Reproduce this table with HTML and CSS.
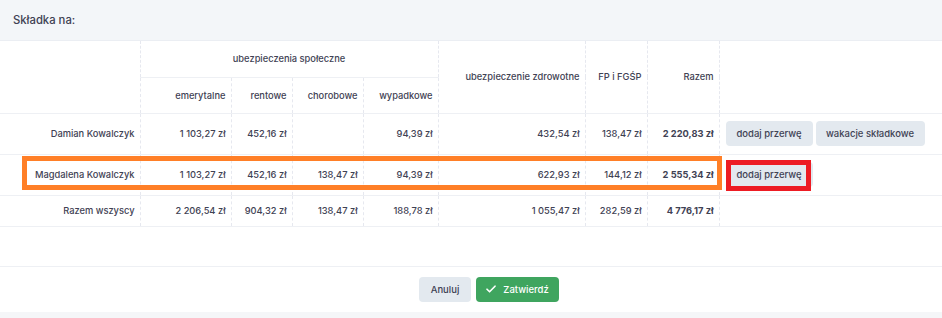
FILE: index.html
```html
<!DOCTYPE html>
<html lang="pl">
<head>
<meta charset="utf-8">
<link rel="stylesheet" href="styles.css">
</head>
<body>
<div class="modal">
  <div class="modal-header">Składka na:</div>
  <table class="grid">
    <colgroup>
      <col class="c-name"><col class="c-em"><col class="c-ren"><col class="c-cho"><col class="c-wyp"><col class="c-zdr"><col class="c-fp"><col class="c-raz"><col>
    </colgroup>
    <thead>
      <tr class="h1">
        <th rowspan="2"></th>
        <th colspan="4" class="center">ubezpieczenia społeczne</th>
        <th rowspan="2">ubezpieczenie zdrowotne</th>
        <th rowspan="2">FP i FGŚP</th>
        <th rowspan="2">Razem</th>
        <th rowspan="2" class="act"></th>
      </tr>
      <tr class="h2">
        <th>emerytalne</th>
        <th>rentowe</th>
        <th>chorobowe</th>
        <th>wypadkowe</th>
      </tr>
    </thead>
    <tbody>
      <tr class="r-main">
        <td>Damian Kowalczyk</td>
        <td>1 103,27 zł</td>
        <td>452,16 zł</td>
        <td></td>
        <td>94,39 zł</td>
        <td>432,54 zł</td>
        <td>138,47 zł</td>
        <td class="bold">2 220,83 zł</td>
        <td class="act"><div class="btns"><button class="btn btn-sm w1">dodaj przerwę</button><button class="btn btn-sm w2">wakacje składkowe</button></div></td>
      </tr>
      <tr class="r-main">
        <td>Magdalena Kowalczyk</td>
        <td>1 103,27 zł</td>
        <td>452,16 zł</td>
        <td>138,47 zł</td>
        <td>94,39 zł</td>
        <td>622,93 zł</td>
        <td>144,12 zł</td>
        <td class="bold">2 555,34 zł</td>
        <td class="act"><div class="btns"><button class="btn btn-sm w1">dodaj przerwę</button></div></td>
      </tr>
      <tr class="r-total">
        <td>Razem wszyscy</td>
        <td>2 206,54 zł</td>
        <td>904,32 zł</td>
        <td>138,47 zł</td>
        <td>188,78 zł</td>
        <td>1 055,47 zł</td>
        <td>282,59 zł</td>
        <td class="bold">4 776,17 zł</td>
        <td class="act"></td>
      </tr>
    </tbody>
  </table>
  <div class="spacer"></div>
  <div class="modal-footer">
    <button class="btn btn-light">Anuluj</button>
    <button class="btn btn-success"><svg class="check" width="10" height="8" viewBox="0 0 10 8"><path d="M1 4.2 L3.6 6.8 L9 1.2" fill="none" stroke="#fff" stroke-width="1.6" stroke-linecap="round" stroke-linejoin="round"/></svg>Zatwierdź</button>
  </div>
  <div class="mark mark-orange"></div>
  <div class="mark mark-red"></div>
</div>
</body>
</html>
```

FILE: styles.css
```css
* { box-sizing: border-box; }
html, body { margin: 0; padding: 0; }
body {
  background: #f5f6f8;
  font-family: Inter, "Noto Sans", sans-serif;
  color: #3f4254;
  width: 942px;
  height: 318px;
  overflow: hidden;
}
.modal {
  position: relative;
  background: #fff;
}
.modal-header {
  height: 41px;
  background: #f3f6f9;
  border-bottom: 1px solid #ebeef3;
  padding-left: 13px;
  display: flex;
  align-items: center;
  font-size: 11.3px;
  font-weight: 500;
  color: #3f4254;
}
.grid {
  width: 100%;
  border-collapse: collapse;
  table-layout: fixed;
  font-size: 9.3px;
}
.c-name { width: 140px; }
.c-em { width: 91px; }
.c-ren { width: 61px; }
.c-cho { width: 71px; }
.c-wyp { width: 75px; }
.c-zdr { width: 147px; }
.c-fp { width: 62px; }
.c-raz { width: 72px; }
.grid th, .grid td {
  padding: 0 5px;
  text-align: right;
  vertical-align: middle;
  white-space: nowrap;
  border-right: 1px dashed #e6e8ef;
  border-bottom: 1px solid #eef0f4;
}
.grid th { font-weight: 500; color: #3f4254; }
.grid td { font-weight: 500; }
.grid .act { border-right: none; text-align: left; padding-left: 6px; }
.grid th.center { text-align: center; }
.h1, .h2 { height: 36px; }
.r-main { height: 41px; }
.r-total { height: 31px; }
.bold { font-weight: 700 !important; }
.btns { display: flex; gap: 3px; }
.btn {
  font-family: inherit;
  font-size: 9.5px;
  height: 25px;
  padding: 0;
  border: none;
  border-radius: 4px;
  background: #e3e9ef;
  color: #3f4254;
  display: inline-flex;
  align-items: center;
  justify-content: center;
  gap: 7px;
}
.btn-sm { font-weight: 500; }
.w1 { width: 87px; }
.w2 { width: 109px; }
.spacer { height: 39px; }
.modal-footer {
  height: 46px;
  border-top: 1px solid #eef0f4;
  display: flex;
  justify-content: center;
  align-items: center;
  gap: 5px;
  padding-left: 36px;
}
.btn-light { width: 52px; font-weight: 500; }
.btn-success { background: #3fa55f; color: #fff; width: 83px; font-weight: 500; }
.mark { position: absolute; pointer-events: none; }
.mark-orange { left: 22px; top: 156px; width: 700px; height: 34px; border: 5px solid #ff7f27; }
.mark-red { left: 726px; top: 160px; width: 85px; height: 31px; border: 5px solid #ed1c24; }
```
